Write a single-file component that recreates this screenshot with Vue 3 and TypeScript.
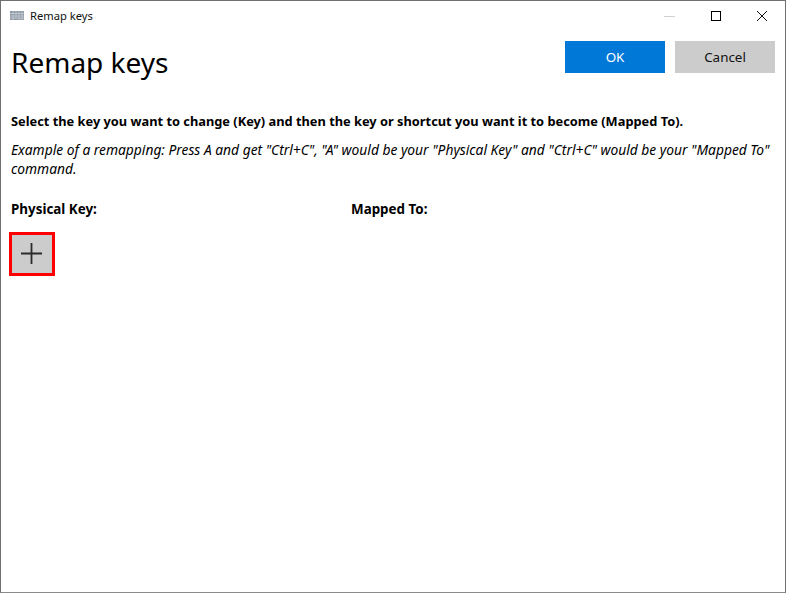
<script setup lang="ts">
const title: string = 'Remap keys'
</script>

<template>
  <div class="window">
    <header class="titlebar">
      <svg class="appicon" width="14" height="9" viewBox="0 0 14 9" aria-hidden="true">
        <rect x="0" y="0" width="14" height="9" fill="#8d97a5" />
        <path d="M0 2.5H14M0 5H14M0 7.2H14M3 0V9M6 0V7M9 0V9M12 0V9" stroke="#cfd4da" stroke-width="0.7" fill="none" />
      </svg>
      <span class="apptitle">{{ title }}</span>
      <div class="controls">
        <span class="ctl"><svg width="12" height="12" viewBox="0 0 12 12"><path d="M0 6.5H11" stroke="#d0d0d0" fill="none" /></svg></span>
        <span class="ctl"><svg width="12" height="12" viewBox="0 0 12 12"><rect x="1.5" y="1.5" width="9" height="9" stroke="#000" fill="none" /></svg></span>
        <span class="ctl"><svg width="12" height="12" viewBox="0 0 12 12"><path d="M1 1L11 11M11 1L1 11" stroke="#111" fill="none" /></svg></span>
      </div>
    </header>
    <main class="content">
      <div class="top">
        <h1 class="heading">{{ title }}</h1>
        <div class="actions">
          <button class="btn primary">OK</button>
          <button class="btn">Cancel</button>
        </div>
      </div>
      <p class="lead">Select the key you want to change (Key) and then the key or shortcut you want it to become (Mapped To).</p>
      <p class="example">Example of a remapping: Press A and get "Ctrl+C", "A" would be your "Physical Key" and "Ctrl+C" would be your "Mapped To" command.</p>
      <div class="columns">
        <strong>Physical Key:</strong>
        <strong>Mapped To:</strong>
      </div>
      <button class="add" aria-label="Add">
        <svg width="21" height="21" viewBox="0 0 21 21"><path d="M10.5 0V21M0 10.5H21" stroke="#2b2b2b" stroke-width="1.8" fill="none" /></svg>
      </button>
    </main>
  </div>
</template>

<style>
html, body { margin: 0; background: #fff; }
</style>

<style scoped>
.window {
  box-sizing: border-box;
  width: 786px;
  height: 593px;
  border: 1px solid #707070;
  border-bottom-color: #8a8a8a;
  background: #fff;
  color: #000;
  font-family: "Noto Sans", "Open Sans", sans-serif;
  overflow: hidden;
}
.titlebar {
  display: flex;
  align-items: center;
  height: 30px;
  padding-left: 9px;
}
.apptitle {
  margin-left: 6px;
  margin-bottom: 2px;
  font-size: 11.2px;
  color: #111;
}
.appicon {
  margin-bottom: 1px;
}
.controls {
  margin-left: auto;
  display: flex;
}
.ctl {
  width: 46px;
  height: 30px;
  display: flex;
  align-items: center;
  justify-content: center;
}
.content {
  padding: 0 10px;
}
.top {
  display: flex;
  justify-content: space-between;
  height: 42px;
  padding-top: 10px;
}
.heading {
  margin: 0;
  font-size: 28px;
  line-height: 42px;
  font-weight: 400;
}
.actions {
  display: flex;
  gap: 10px;
  align-self: flex-start;
}
.btn {
  width: 100px;
  height: 32px;
  border: 0;
  padding: 0;
  background: #ccc;
  color: #111;
  font: inherit;
  font-size: 13.4px;
}
.primary {
  background: #0078d7;
  color: #fff;
}
.lead {
  margin: 28px 0 0;
  font-size: 12.82px;
  line-height: 20px;
  font-weight: 700;
  white-space: nowrap;
}
.example {
  margin: 9px 0 0;
  font-size: 13.8px;
  line-height: 19px;
  font-style: italic;
  width: 765px;
}
.columns {
  display: grid;
  grid-template-columns: 340px 1fr;
  margin-top: 21px;
  font-size: 13.4px;
  line-height: 20px;
}
.add {
  display: flex;
  align-items: center;
  justify-content: center;
  box-sizing: border-box;
  width: 46px;
  height: 44px;
  margin: 13px 0 0 -2px;
  padding: 0 2px 2px 0;
  border: 3px solid #f00;
  background: #ccc;
}
</style>
